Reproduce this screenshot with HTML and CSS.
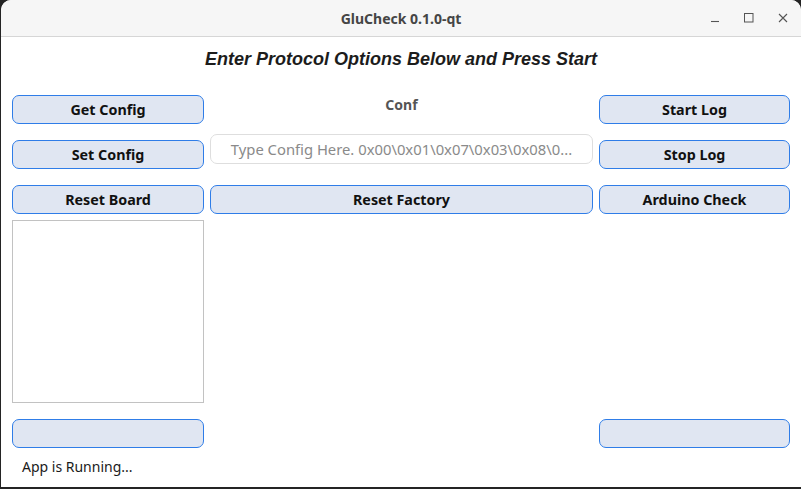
FILE: index.html
```html
<!DOCTYPE html>
<html>
<head>
<meta charset="utf-8">
<title>GluCheck 0.1.0-qt</title>
<link rel="stylesheet" href="styles.css">
</head>
<body>
<div class="window">
  <header class="titlebar">
    <div class="title">GluCheck 0.1.0-qt</div>
    <div class="controls">
      <svg class="ctl" width="10" height="10" viewBox="0 0 10 10"><path d="M1 8.5h8" stroke="#555" stroke-width="1.1" fill="none"/></svg>
      <svg class="ctl" width="10" height="10" viewBox="0 0 10 10"><rect x="0.5" y="0.5" width="8.5" height="8.5" stroke="#555" stroke-width="1" fill="none"/></svg>
      <svg class="ctl" width="10" height="10" viewBox="0 0 10 10"><path d="M1 1l8 8M9 1l-8 8" stroke="#555" stroke-width="1.1" fill="none"/></svg>
    </div>
  </header>
  <main class="content">
    <h1 class="heading">Enter Protocol Options Below and Press Start</h1>
    <div class="grid">
      <button class="btn">Get Config</button>
      <div class="label">Conf</div>
      <button class="btn">Start Log</button>

      <button class="btn btn-low">Set Config</button>
      <input class="field" type="text" placeholder="Type Config Here. 0x00\0x01\0x07\0x03\0x08\0...">
      <button class="btn btn-low">Stop Log</button>

      <button class="btn">Reset Board</button>
      <button class="btn">Reset Factory</button>
      <button class="btn">Arduino Check</button>

      <div class="listbox"></div>
      <div class="spacer"></div>
      <div class="spacer"></div>

      <button class="btn"></button>
      <div class="spacer"></div>
      <button class="btn"></button>
    </div>
    <div class="status">App is Running...</div>
  </main>
</div>
</body>
</html>
```

FILE: styles.css
```css
* { box-sizing: border-box; }
html, body {
  margin: 0;
  padding: 0;
  width: 801px;
  height: 489px;
  overflow: hidden;
  background: #242424;
}
.window {
  margin-left: 1px;
  width: 800px;
  height: 487px;
  background: #ffffff;
  border-radius: 10px 10px 0 0;
  overflow: hidden;
  display: flex;
  flex-direction: column;
}
.titlebar {
  height: 37px;
  flex: none;
  background: #f6f6f6;
  border-bottom: 1px solid #d6d6d6;
  display: flex;
  align-items: center;
  justify-content: center;
  position: relative;
}
.title {
  font-family: "Noto Sans", "DejaVu Sans", sans-serif;
  font-weight: bold;
  font-size: 14px;
  color: #454545;
}
.controls {
  position: absolute;
  right: 13px;
  top: 13px;
  display: flex;
  gap: 24px;
}
.ctl { display: block; }
.content {
  flex: 1;
  display: flex;
  flex-direction: column;
  padding: 0 11px;
}
.heading {
  margin: 11px 0 0 0;
  height: 22px;
  line-height: 22px;
  text-align: center;
  font-family: "Liberation Sans", Arial, sans-serif;
  font-style: italic;
  font-weight: bold;
  font-size: 18px;
  color: #1c1c1c;
}
.grid {
  margin-top: 25px;
  display: grid;
  grid-template-columns: 192px 383px 191px;
  grid-template-rows: 39px 51px 35px 199px 29px;
  column-gap: 6px;
  align-items: start;
}
.btn {
  height: 29px;
  margin: 0;
  padding: 0;
  background: #e0e6f2;
  border: 1px solid #2f7de8;
  border-radius: 7px;
  font-family: "Noto Sans", "DejaVu Sans", sans-serif;
  font-weight: bold;
  font-size: 14.3px;
  color: #111;
  line-height: 27px;
}
.btn-low { margin-top: 6px; }
.label {
  text-align: center;
  font-family: "Noto Sans", "DejaVu Sans", sans-serif;
  font-weight: bold;
  font-size: 14px;
  color: #555;
  line-height: 20px;
}
.field {
  height: 30px;
  width: 100%;
  margin: 0;
  border: 1px solid #dedede;
  border-radius: 7px;
  background: #fff;
  text-align: center;
  font-family: "Noto Sans", "DejaVu Sans", sans-serif;
  font-size: 14.8px;
  color: #333;
  padding: 0 10px;
}
.field::placeholder { color: #8a8a8a; opacity: 1; }
.listbox {
  height: 183px;
  border: 1px solid #c2c2c2;
  background: #fff;
}
.status {
  margin-top: 9px;
  padding-left: 10px;
  font-family: "Noto Sans", "DejaVu Sans", sans-serif;
  font-size: 14px;
  color: #1a1a1a;
  line-height: 19px;
}
```
